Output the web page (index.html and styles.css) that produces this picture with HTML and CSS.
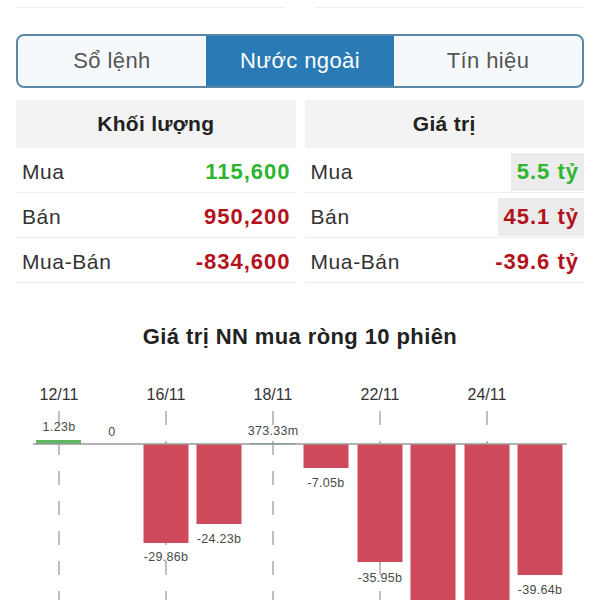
FILE: index.html
```html
<!DOCTYPE html>
<html>
<head>
  <title>Nước ngoài</title>
  <link rel="stylesheet" href="styles.css">
</head>
<body>
  <div class="page">
    <div class="top-lines">
      <div class="line"></div>
      <div class="line"></div>
    </div>

    <div class="tabs">
      <div class="tab">Sổ lệnh</div>
      <div class="tab active">Nước ngoài</div>
      <div class="tab">Tín hiệu</div>
    </div>

    <div class="stats">
      <div class="stat-col">
        <div class="stat-head">Khối lượng</div>
        <div class="stat-row"><span class="label">Mua</span><span class="val up">115,600</span></div>
        <div class="stat-row"><span class="label">Bán</span><span class="val down">950,200</span></div>
        <div class="stat-row"><span class="label">Mua-Bán</span><span class="val down">-834,600</span></div>
      </div>
      <div class="stat-col">
        <div class="stat-head">Giá trị</div>
        <div class="stat-row"><span class="label">Mua</span><span class="val up boxed">5.5 tỷ</span></div>
        <div class="stat-row"><span class="label">Bán</span><span class="val down boxed">45.1 tỷ</span></div>
        <div class="stat-row"><span class="label">Mua-Bán</span><span class="val down">-39.6 tỷ</span></div>
      </div>
    </div>

    <h2 class="chart-title">Giá trị NN mua ròng 10 phiên</h2>
  </div>

  <div class="chart">
    <svg width="600" height="240" viewBox="0 0 600 240">
      <g class="grid">
        <line x1="59" y1="50" x2="59" y2="240"/>
        <line x1="166" y1="50" x2="166" y2="240"/>
        <line x1="273" y1="50" x2="273" y2="240"/>
        <line x1="380" y1="50" x2="380" y2="240"/>
        <line x1="487" y1="50" x2="487" y2="240"/>
      </g>

      <g class="dates">
        <text x="59" y="39">12/11</text>
        <text x="166" y="39">16/11</text>
        <text x="273" y="39">18/11</text>
        <text x="380" y="39">22/11</text>
        <text x="487" y="39">24/11</text>
      </g>

      <g class="bars-up">
        <rect x="36" y="79" width="45" height="4"/>
        <rect x="250" y="82" width="45" height="1.3"/>
      </g>
      <g class="bars-down">
        <rect x="143.5" y="83" width="45" height="99"/>
        <rect x="196.5" y="83" width="45" height="80"/>
        <rect x="303.5" y="83" width="45" height="24"/>
        <rect x="357.5" y="83" width="45" height="118"/>
        <rect x="410.5" y="83" width="45" height="170"/>
        <rect x="464.5" y="83" width="45" height="170"/>
        <rect x="517.5" y="83" width="45" height="131"/>
      </g>

      <line class="axis" x1="33" y1="83" x2="567" y2="83"/>

      <g class="values">
        <text x="59" y="70">1.23b</text>
        <text x="112" y="75">0</text>
        <text x="273" y="74">373.33m</text>
        <text x="166" y="200">-29.86b</text>
        <text x="219" y="182">-24.23b</text>
        <text x="326" y="126">-7.05b</text>
        <text x="380" y="221">-35.95b</text>
        <text x="540" y="233">-39.64b</text>
      </g>
    </svg>
  </div>
</body>
</html>
```

FILE: styles.css
```css
body {
  margin: 0;
  background: #fff;
  font-family: "Liberation Sans", Arial, sans-serif;
  color: #333;
}

.page {
  padding: 0 16px;
}

.top-lines {
  display: flex;
  gap: 30px;
  height: 8px;
}

.line {
  flex: 1;
  border-bottom: 1px solid #eee;
}

.tabs {
  display: flex;
  margin-top: 26px;
  height: 50px;
  border: 2px solid #5b88a6;
  border-radius: 8px;
  overflow: hidden;
  background: #f6f9fb;
}

.tab {
  flex: 1;
  display: flex;
  align-items: center;
  justify-content: center;
  font-size: 22px;
  letter-spacing: 0.4px;
  color: #555;
}

.tab.active {
  background: #2a7ab6;
  color: #fff;
}

.stats {
  display: flex;
  gap: 9px;
  margin-top: 12px;
}

.stat-col {
  flex: 1;
}

.stat-head {
  height: 48px;
  display: flex;
  align-items: center;
  justify-content: center;
  background: #f3f3f3;
  font-size: 21px;
  letter-spacing: 0.3px;
  font-weight: bold;
  color: #222;
}

.stat-row {
  height: 45px;
  display: flex;
  align-items: center;
  justify-content: space-between;
  border-bottom: 1px solid #eee;
  box-sizing: border-box;
  padding-left: 6px;
  padding-top: 3px;
}

.label {
  font-size: 21px;
  letter-spacing: 0.6px;
  color: #333;
}

.val {
  font-size: 22px;
  letter-spacing: 1px;
  font-weight: bold;
  padding: 0 5px 0 6px;
  line-height: 38px;
}

.val.boxed {
  background: #ececec;
}

.up {
  color: #2fb52f;
}

.down {
  color: #b3121d;
}

.chart-title {
  margin: 41px 0 0;
  text-align: center;
  font-size: 22px;
  letter-spacing: 0.4px;
  font-weight: bold;
  color: #222;
  line-height: 26px;
}

.chart {
  margin-top: 11px;
}

.chart svg {
  display: block;
}

.grid line {
  stroke: #aaa;
  stroke-width: 1.5;
  stroke-dasharray: 14 16;
}

.dates text {
  font-size: 16px;
  fill: #333;
  text-anchor: middle;
}

.bars-up rect {
  fill: #5cb85c;
}

.bars-down rect {
  fill: #cf4a5a;
}

.axis {
  stroke: #999;
  stroke-width: 1.5;
}

.values text {
  font-size: 12.5px;
  letter-spacing: 0.3px;
  fill: #4a4a4a;
  text-anchor: middle;
}
```
